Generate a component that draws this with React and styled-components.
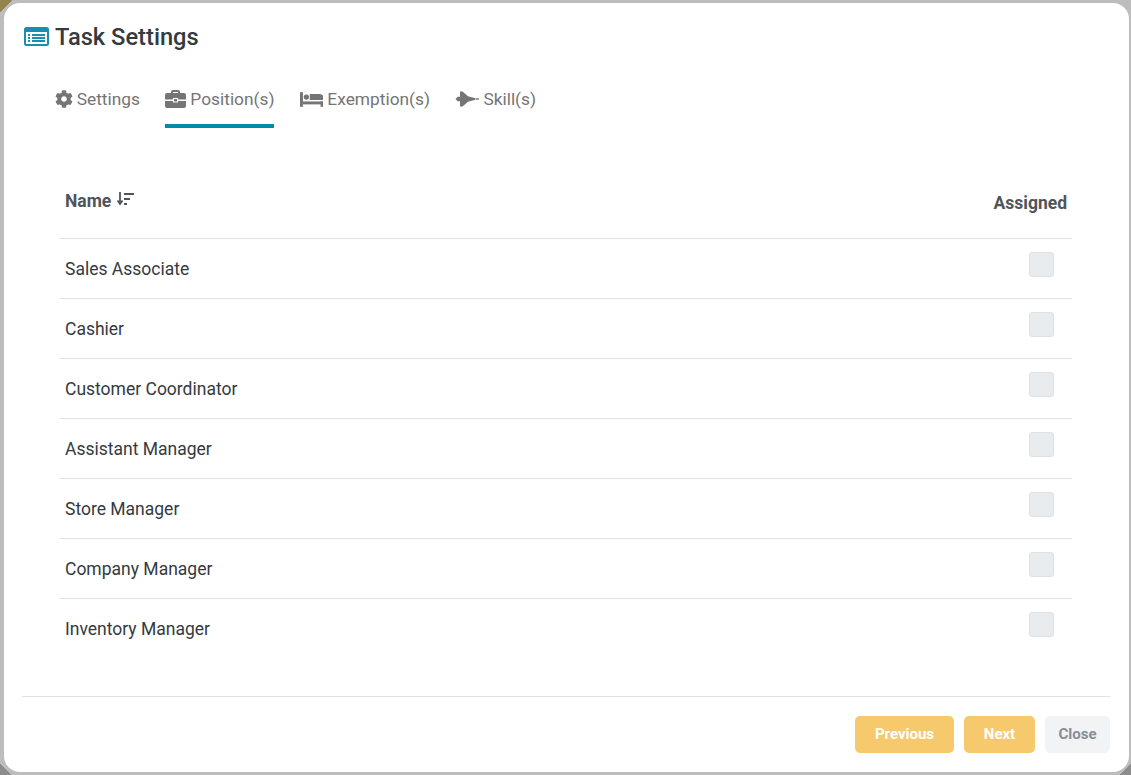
import React from 'react'
import styled, { createGlobalStyle } from "styled-components";
import { FaCog } from "react-icons/fa";

const GlobalStyle = createGlobalStyle`
  html, body {
    margin: 0;
    padding: 0;
    height: 775px;
    overflow: hidden;
    background-color: #bdbdbd;
    font-family: Roboto, "Liberation Sans", sans-serif;
  }
`;

const Backdrop = styled.div`
  height: 775px;
  box-sizing: border-box;
  padding: 3px 2px 3px 4px;
  background:
    linear-gradient(135deg, #93834f 9px, transparent 9px),
    linear-gradient(-45deg, #8c8c8c 8px, transparent 8px),
    linear-gradient(45deg, #8c8c8c 8px, transparent 8px),
    #bdbdbd;
`;

const Modal = styled.div`
  height: 769px;
  box-sizing: border-box;
  background-color: #fff;
  border-radius: 16px;
  padding: 0 19px 0 18px;
  display: flex;
  flex-direction: column;
`;

const Title = styled.h1`
  margin: 0;
  height: 67px;
  box-sizing: border-box;
  padding: 0 0 0 2px;
  display: flex;
  align-items: center;
  gap: 6px;
  font-size: 23.7px;
  font-weight: 500;
  color: #343a40;
`;

const Tabs = styled.div`
  display: flex;
  gap: 25.4px;
  padding-left: 32.7px;
  height: 58px;
`;

const Tab = styled.div`
  height: 58px;
  box-sizing: border-box;
  display: flex;
  align-items: center;
  gap: 4px;
  padding-top: 4px;
  font-size: 17.33px;
  color: #757575;
  border-bottom: 4px solid ${({ $active }) => ($active ? "#008ca8" : "transparent")};
`;

const Table = styled.div`
  margin: 51px 38px 0 38px;
  flex: 1;
`;

const HeadRow = styled.div`
  height: 60px;
  display: flex;
  align-items: center;
  justify-content: space-between;
  padding: 0 5px 12px 5px;
  border-bottom: 1px solid #dee2e6;
  box-sizing: border-box;
  font-size: 17.5px;
  font-weight: 700;
  color: #50555a;
`;

const NameHead = styled.div`
  display: flex;
  align-items: flex-start;
  gap: 6px;
  margin-top: -4px;
`;

const SortSvg = styled.svg`
  margin-top: 1px;
`;

const Row = styled.div`
  height: 60px;
  display: flex;
  align-items: center;
  justify-content: space-between;
  padding: 0 18px 0 5px;
  box-sizing: border-box;
  border-bottom: 1px solid ${({ $last }) => ($last ? "transparent" : "#dee2e6")};
  font-size: 17.5px;
  color: #343a40;
`;

const Check = styled.div`
  width: 25px;
  height: 25px;
  box-sizing: border-box;
  margin-top: -8px;
  border-radius: 3px;
  background-color: #e9ecef;
  border: 1px solid #dee2e6;
`;

const Footer = styled.div`
  height: 76px;
  border-top: 1px solid #dee2e6;
  box-sizing: border-box;
  padding-top: 19px;
  display: flex;
  justify-content: flex-end;
  gap: 10px;
`;

const Button = styled.button`
  height: 37px;
  width: ${({ $width }) => $width}px;
  padding: 0 0 2px 0;
  border: none;
  border-radius: 5px;
  font-family: inherit;
  font-size: 15px;
  font-weight: 700;
  color: ${({ $gray }) => ($gray ? "#868e96" : "#fff")};
  background-color: ${({ $gray }) => ($gray ? "#f1f3f5" : "#f5c96c")};
`;

const ListIcon = () => (
  <svg width="25" height="19" viewBox="0 0 25 19">
    <rect x="0" y="0" width="25" height="19" rx="2.5" fill="#1b8db0" />
    <rect x="2" y="5" width="21" height="12" fill="#fff" />
    <rect x="4" y="7" width="2" height="2" fill="#1b8db0" />
    <rect x="4" y="10" width="2" height="2" fill="#1b8db0" />
    <rect x="4" y="13" width="2" height="2" fill="#1b8db0" />
    <rect x="8" y="7" width="13" height="2" fill="#1b8db0" />
    <rect x="8" y="10" width="13" height="2" fill="#1b8db0" />
    <rect x="8" y="13" width="13" height="2" fill="#1b8db0" />
  </svg>
);

const SortIcon = () => (
  <SortSvg width="18" height="15" viewBox="0 0 18 15" fill="none" stroke="#50555a" strokeWidth="1.8">
    <path d="M3 0v11M0.5 8.5L3 12l2.5-3.5" />
    <path d="M7 2h10M7 7h6M7 12h3" />
  </SortSvg>
);

const BriefcaseIcon = () => (
  <svg width="21" height="18" viewBox="0 0 21 18" fill="#757575">
    <path d="M6 4V2a2 2 0 0 1 2-2h5a2 2 0 0 1 2 2v2h-2V2H8v2z" />
    <path d="M2 3h17a2 2 0 0 1 2 2v4.500H13V8H8v1.500H0V5a2 2 0 0 1 2-2z" />
    <path d="M0 11h8v1.500h5V11h8v5a2 2 0 0 1-2 2H2a2 2 0 0 1-2-2z" />
    <rect x="9" y="9" width="3" height="2.500" />
  </svg>
);

const BedIcon = () => (
  <svg width="23.500" height="15" viewBox="0 0 24 15" fill="#757575">
    <rect x="0" y="0" width="3" height="15" />
    <circle cx="6.500" cy="5" r="2.700" />
    <path d="M10 2h10a4 4 0 0 1 4 4v2H10z" />
    <rect x="3" y="9.500" width="21" height="3" />
    <rect x="21" y="9.500" width="3" height="5.500" />
  </svg>
);

const JetIcon = () => (
  <svg width="24" height="16" viewBox="0 0 24 16" fill="#757575">
    <path d="M0.500 8L3 5.500 5 6V0.500h2.500L13 5.200l7.500 2V8.800L13 10.800 7.500 15.500H5V10L3 10.500z" />
    <rect x="21" y="7.300" width="3" height="1.400" />
  </svg>
);

const positions = [
  "Sales Associate",
  "Cashier",
  "Customer Coordinator",
  "Assistant Manager",
  "Store Manager",
  "Company Manager",
  "Inventory Manager",
];

const App = () => {
  return (
    <>
      <GlobalStyle />
      <Backdrop>
        <Modal>
          <Title>
            <ListIcon />
            Task Settings
          </Title>
          <Tabs>
            <Tab><FaCog size={18} /> Settings</Tab>
            <Tab $active><BriefcaseIcon /> Position(s)</Tab>
            <Tab><BedIcon /> Exemption(s)</Tab>
            <Tab><JetIcon /> Skill(s)</Tab>
          </Tabs>
          <Table>
            <HeadRow>
              <NameHead>Name <SortIcon /></NameHead>
              <span>Assigned</span>
            </HeadRow>
            {positions.map((name, i) => (
              <Row key={name} $last={i === positions.length - 1}>
                {name}
                <Check />
              </Row>
            ))}
          </Table>
          <Footer>
            <Button $width={99}>Previous</Button>
            <Button $width={71}>Next</Button>
            <Button $width={65} $gray>Close</Button>
          </Footer>
        </Modal>
      </Backdrop>
    </>
  )
}

export default App
